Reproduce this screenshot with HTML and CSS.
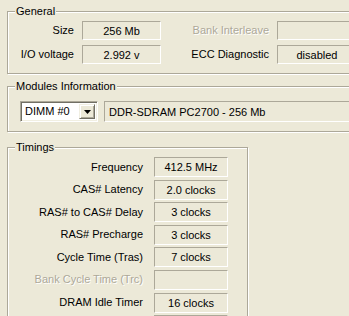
FILE: index.html
```html
<!DOCTYPE html>
<html lang="en">

<head>
    <meta charset="UTF-8">
    <title>Memory</title>
    <link rel="stylesheet" href="styles.css">
</head>

<body>
    <div class="page">
        <section class="group group-general">
            <span class="group-title">General</span>
            <div class="general-grid">
                <span class="label">Size</span>
                <span class="value">256 Mb</span>
                <span class="label disabled">Bank Interleave</span>
                <span class="value"></span>
                <span class="label">I/O voltage</span>
                <span class="value">2.992 v</span>
                <span class="label">ECC Diagnostic</span>
                <span class="value">disabled</span>
            </div>
        </section>

        <section class="group group-modules">
            <span class="group-title">Modules Information</span>
            <div class="modules-row">
                <div class="combo">
                    <span class="combo-text">DIMM #0</span>
                    <span class="combo-button">
                        <svg width="7" height="4" viewBox="0 0 7 4"><path d="M0 0h7L3.5 4z" fill="#000"/></svg>
                    </span>
                </div>
                <span class="value module-name">DDR-SDRAM PC2700 - 256 Mb</span>
            </div>
        </section>

        <section class="group group-timings">
            <span class="group-title">Timings</span>
            <div class="timings-grid">
                <span class="label">Frequency</span>
                <span class="value">412.5 MHz</span>
                <span class="label">CAS# Latency</span>
                <span class="value">2.0 clocks</span>
                <span class="label">RAS# to CAS# Delay</span>
                <span class="value">3 clocks</span>
                <span class="label">RAS# Precharge</span>
                <span class="value">3 clocks</span>
                <span class="label">Cycle Time (Tras)</span>
                <span class="value">7 clocks</span>
                <span class="label disabled">Bank Cycle Time (Trc)</span>
                <span class="value"></span>
                <span class="label">DRAM Idle Timer</span>
                <span class="value">16 clocks</span>
                <span class="label"></span>
                <span class="value"></span>
            </div>
        </section>
    </div>
</body>

</html>
```

FILE: styles.css
```css
* {
    margin: 0;
    padding: 0;
    box-sizing: border-box;
}

body,
html {
    height: 100%;
    overflow: hidden;
    background: #ece9d8;
    font-family: "Liberation Sans", Arial, sans-serif;
    font-size: 11px;
    color: #000;
}

/* the window is wider than the shot, so clip it */
.page {
    height: 100%;
    padding-left: 7px;
    overflow: hidden;
}

/* etched group frame */
.group {
    position: relative;
    width: 460px;
    border: 1px solid #aca899;
    box-shadow: 1px 1px 0 #fff, inset 1px 1px 0 #fff;
}

.group-title {
    position: absolute;
    top: -7px;
    left: 7px;
    padding: 0 1px;
    line-height: 13px;
    background: #ece9d8;
}

.label {
    text-align: right;
    white-space: nowrap;
    line-height: 13px;
    align-self: center;
}

.label.disabled {
    color: #aca899;
    text-shadow: 1px 1px 0 #fff;
}

.value {
    display: flex;
    align-items: center;
    justify-content: center;
    border: 1px solid;
    border-color: #aca899 #fff #fff #aca899;
    white-space: nowrap;
}

/* General */
.group-general {
    margin-top: 11px;
    padding: 9px 0;
}

.general-grid {
    display: grid;
    grid-template-columns: 66px 79px 100px 80px;
    grid-auto-rows: 19px;
    column-gap: 8px;
    row-gap: 5px;
}

/* Modules Information */
.group-modules {
    margin-top: 12px;
    padding: 14px 0 9px 12px;
}

.modules-row {
    display: flex;
    gap: 6px;
    height: 21px;
}

.combo {
    display: flex;
    align-items: center;
    width: 78px;
    background: #fff;
    border: 1px solid;
    border-color: #aca899 #fff #fff #aca899;
    box-shadow: inset 1px 1px 0 #716f64, inset -1px -1px 0 #f1efe2;
    padding: 2px 2px 2px 4px;
}

.combo-text {
    flex: 1;
    line-height: 13px;
}

.combo-button {
    display: flex;
    align-items: center;
    justify-content: center;
    width: 16px;
    height: 100%;
    background: #ece9d8;
    border: 1px solid;
    border-color: #f1efe2 #716f64 #716f64 #f1efe2;
    box-shadow: inset 1px 1px 0 #fff, inset -1px -1px 0 #aca899;
}

.module-name {
    flex: 1;
    justify-content: flex-start;
    padding-left: 4px;
}

/* Timings */
.group-timings {
    width: 241px;
    height: 200px;
    margin-top: 15px;
    padding-top: 9px;
}

.timings-grid {
    display: grid;
    grid-template-columns: 135px 74px;
    grid-auto-rows: 20px;
    column-gap: 11px;
    row-gap: 2.6px;
}
```
